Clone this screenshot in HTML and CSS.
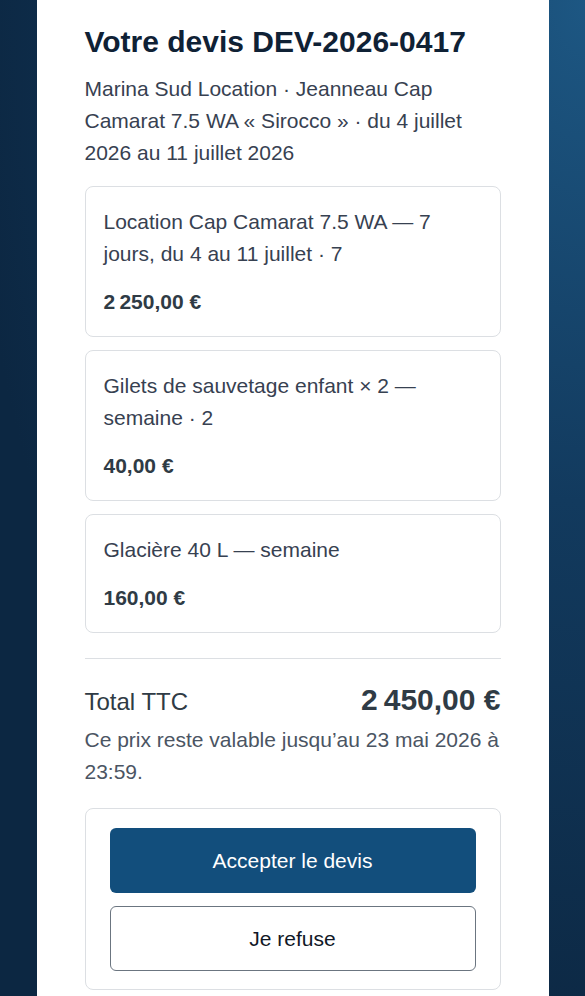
FILE: index.html
```html
<!DOCTYPE html>
<html lang="fr">
<head>
  <meta charset="UTF-8" />
  <meta name="viewport" content="width=device-width, initial-scale=1.0" />
  <title>Votre devis DEV-2026-0417</title>
  <link rel="stylesheet" href="styles.css">
</head>
<body>
  <div class="page">
    <h1>Votre devis DEV-2026-0417</h1>
    <p class="intro">Marina Sud Location · Jeanneau Cap Camarat 7.5 WA « Sirocco » · du 4 juillet 2026 au 11 juillet 2026</p>

    <div class="lines">
      <div class="line">
        <p class="line-label">Location Cap Camarat 7.5 WA — 7 jours, du 4 au 11 juillet · 7</p>
        <p class="line-price">2&#8239;250,00 €</p>
      </div>
      <div class="line">
        <p class="line-label">Gilets de sauvetage enfant × 2 — semaine · 2</p>
        <p class="line-price">40,00 €</p>
      </div>
      <div class="line">
        <p class="line-label">Glacière 40 L — semaine</p>
        <p class="line-price">160,00 €</p>
      </div>
    </div>

    <div class="total">
      <div class="total-row">
        <span class="total-label">Total TTC</span>
        <span class="total-amount">2&#8239;450,00 €</span>
      </div>
      <p class="validity">Ce prix reste valable jusqu’au 23 mai 2026 à 23:59.</p>
    </div>

    <div class="actions">
      <button class="btn-accept">Accepter le devis</button>
      <button class="btn-refuse">Je refuse</button>
    </div>
  </div>
</body>
</html>
```

FILE: styles.css
```css
html, body {
  margin: 0;
  padding: 0;
  font-family: "Liberation Sans", Arial, sans-serif;
  background: radial-gradient(ellipse at top right, #1d5783 0%, #123a5e 35%, #0c2742 75%);
  min-height: 100vh;
}
.page {
  max-width: 512px;
  margin: 0 auto;
  background: #fff;
  padding: 24px 48px 24px;
  box-sizing: border-box;
  min-height: 100vh;
}
h1 {
  margin: 0;
  font-size: 30px;
  line-height: 36px;
  color: #0f2135;
}
.intro {
  margin: 13px 0 17px;
  font-size: 21px;
  line-height: 32px;
  color: #374151;
}
.lines {
  display: flex;
  flex-direction: column;
  gap: 13px;
}
.line {
  border: 1px solid #dcdfe3;
  border-radius: 8px;
  padding: 19px 18px 18px;
  background: #fff;
}
.line p {
  margin: 0;
  font-size: 21px;
  line-height: 32px;
}
.line-label {
  color: #374151;
}
.line .line-price {
  margin-top: 16px;
  font-weight: bold;
  color: #2f3b45;
}
.total {
  margin-top: 25px;
  border-top: 1px solid #dcdfe3;
  padding-top: 23px;
}
.total-row {
  display: flex;
  justify-content: space-between;
  align-items: baseline;
  line-height: 36px;
}
.total-label {
  font-size: 24px;
  color: #2f3b45;
}
.total-amount {
  font-size: 30px;
  font-weight: bold;
  color: #2f3b45;
}
.validity {
  margin: 4px 0 0;
  font-size: 21px;
  line-height: 32px;
  color: #4b5563;
}
.actions {
  margin-top: 20px;
  border: 1px solid #dcdfe3;
  border-radius: 8px;
  padding: 19px 24px 18px;
  display: flex;
  flex-direction: column;
  gap: 13px;
}
.actions button {
  height: 65px;
  border-radius: 6px;
  font-family: inherit;
  font-size: 21px;
  cursor: pointer;
}
.btn-accept {
  background: #124e7c;
  color: #fff;
  border: none;
}
.btn-refuse {
  background: #fff;
  color: #111827;
  border: 1.5px solid #6b7580;
}
```
